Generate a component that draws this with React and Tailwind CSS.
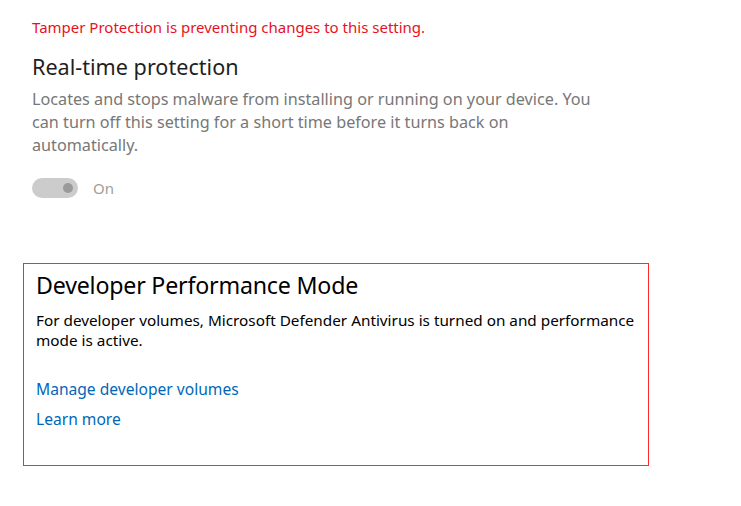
export default function App() {
  return (
    <div className="w-[741px] h-[506px] bg-white overflow-hidden" style={{ fontFamily: '"Noto Sans", "Open Sans", sans-serif' }}>
      <div className="pl-[32px] pt-[17px]">
        <div className="text-[15px] leading-[20px] text-[#e81123]">Tamper Protection is preventing changes to this setting.</div>
        <div className="mt-[16px] text-[21.6px] leading-[28px] text-[#1f1f1f]">Real-time protection</div>
        <div className="mt-[7px] w-[572px] text-[16.2px] leading-[23px] text-[#777777]">
          Locates and stops malware from installing or running on your device. You can turn off this setting for a short time before it turns back on automatically.
        </div>
        <div className="mt-[20px] flex items-center gap-[15px]">
          <div className="w-[46px] h-[20px] rounded-full bg-[#cccccc] flex items-center justify-end pr-[5px]">
            <div className="w-[10px] h-[10px] rounded-full bg-[#9a9a9a]" />
          </div>
          <span className="text-[15px] text-[#a0a0a0]">On</span>
        </div>
      </div>
      <div className="ml-[23px] mt-[63px] w-[626px] h-[203px] border border-[#ff2a2a] pl-[12px] pt-[6px]">
        <div className="text-[23.2px] leading-[30px] text-black tracking-[-0.2px]">Developer Performance Mode</div>
        <div className="mt-[10px] w-[606px] text-[15.3px] leading-[20px] text-black">
          For developer volumes, Microsoft Defender Antivirus is turned on and performance mode is active.
        </div>
        <div className="mt-[28px] text-[15.6px] leading-[22px] text-[#0067b8]">Manage developer volumes</div>
        <div className="mt-[8px] text-[15.6px] leading-[22px] text-[#0067b8]">Learn more</div>
      </div>
    </div>
  );
}
